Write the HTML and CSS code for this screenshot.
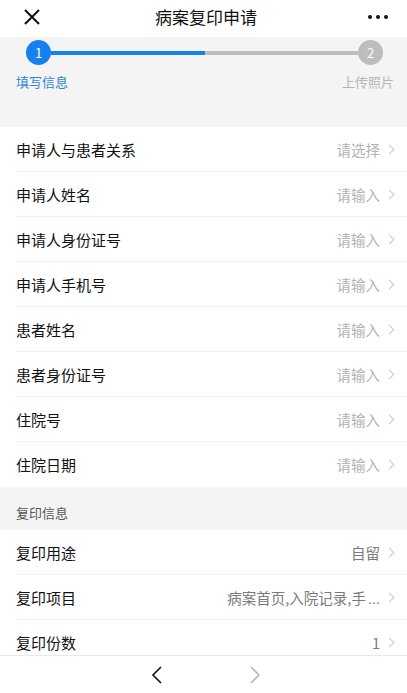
FILE: index.html
```html
<!DOCTYPE html>
<html lang="zh-CN">
<head>
    <meta charset="UTF-8">
    <meta name="viewport" content="width=device-width, initial-scale=1.0">
    <title>病案复印申请</title>
    <link rel="stylesheet" href="styles.css">
</head>
<body>
    <div class="page">
        <div class="topbar">
            <svg class="close" width="16" height="16" viewBox="0 0 16 16">
                <path d="M1 1 L15 15 M15 1 L1 15" stroke="#111" stroke-width="2" fill="none"/>
            </svg>
            <div class="title">病案复印申请</div>
            <div class="more"><span></span><span></span><span></span></div>
        </div>

        <div class="main">
            <div class="steps">
                <div class="step-track">
                    <div class="dot dot-active">1</div>
                    <div class="track"></div>
                    <div class="dot">2</div>
                </div>
                <div class="step-labels">
                    <span class="label-active">填写信息</span>
                    <span class="label-idle">上传照片</span>
                </div>
            </div>

            <div class="group">
                <div class="row"><div class="row-in"><span class="name">申请人与患者关系</span><span class="value muted">请选择</span><i class="arrow"></i></div></div>
                <div class="row"><div class="row-in"><span class="name">申请人姓名</span><span class="value muted">请输入</span><i class="arrow"></i></div></div>
                <div class="row"><div class="row-in"><span class="name">申请人身份证号</span><span class="value muted">请输入</span><i class="arrow"></i></div></div>
                <div class="row"><div class="row-in"><span class="name">申请人手机号</span><span class="value muted">请输入</span><i class="arrow"></i></div></div>
                <div class="row"><div class="row-in"><span class="name">患者姓名</span><span class="value muted">请输入</span><i class="arrow"></i></div></div>
                <div class="row"><div class="row-in"><span class="name">患者身份证号</span><span class="value muted">请输入</span><i class="arrow"></i></div></div>
                <div class="row"><div class="row-in"><span class="name">住院号</span><span class="value muted">请输入</span><i class="arrow"></i></div></div>
                <div class="row"><div class="row-in"><span class="name">住院日期</span><span class="value muted">请输入</span><i class="arrow"></i></div></div>
            </div>

            <div class="group-title">复印信息</div>

            <div class="group">
                <div class="row"><div class="row-in"><span class="name">复印用途</span><span class="value">自留</span><i class="arrow"></i></div></div>
                <div class="row"><div class="row-in"><span class="name">复印项目</span><span class="value">病案首页,入院记录,手<span class="dots">...</span></span><i class="arrow"></i></div></div>
                <div class="row"><div class="row-in"><span class="name">复印份数</span><span class="value">1</span><i class="arrow"></i></div></div>
            </div>
        </div>

        <div class="toolbar">
            <svg width="12" height="18" viewBox="0 0 12 18">
                <path d="M10 1 L2 9 L10 17" stroke="#111" stroke-width="1.6" fill="none"/>
            </svg>
            <svg width="12" height="18" viewBox="0 0 12 18">
                <path d="M2 1 L10 9 L2 17" stroke="#b8b8b8" stroke-width="1.6" fill="none"/>
            </svg>
        </div>
    </div>
</body>
</html>
```

FILE: styles.css
```css
* {
    box-sizing: border-box;
}

body {
    margin: 0;
    padding: 0;
    background-color: #f4f4f4;
    color: #111;
    font-family: "Noto Sans CJK SC", "Noto Sans", sans-serif;
}

.page {
    height: 100vh;
    display: flex;
    flex-direction: column;
}

.topbar {
    height: 37px;
    flex-shrink: 0;
    background-color: #fff;
    display: grid;
    grid-template-columns: 1fr auto 1fr;
    align-items: center;
    padding: 0 19px 0 24px;
}

.close {
    display: block;
    margin-top: -3px;
}

.title {
    font-size: 17px;
    line-height: 22px;
    margin-top: -3px;
}

.more {
    display: flex;
    justify-content: flex-end;
    gap: 4px;
    margin-top: -3px;
}

.more span {
    width: 4px;
    height: 4px;
    border-radius: 50%;
    background-color: #111;
}

.main {
    flex: 1;
    overflow: hidden;
}

.steps {
    height: 90px;
    padding-top: 3px;
}

.step-track {
    display: flex;
    align-items: center;
    padding: 0 24px 0 26px;
}

.dot {
    width: 25px;
    height: 25px;
    border-radius: 50%;
    background-color: #bdbdbd;
    color: #fff;
    font-size: 13px;
    line-height: 25px;
    text-align: center;
    flex-shrink: 0;
}

.dot-active {
    background-color: #1580ee;
}

.track {
    flex: 1;
    height: 4px;
    background: linear-gradient(to right, #1580ee 50%, #bdbdbd 50%);
}

.step-labels {
    display: flex;
    justify-content: space-between;
    padding: 0 13px 0 16px;
    margin-top: 8px;
    font-size: 13px;
    line-height: 18px;
}

.label-active {
    color: #2d86d8;
}

.label-idle {
    color: #b5b5b5;
}

.group {
    background-color: #fff;
}

.row {
    padding-left: 16px;
}

.row-in {
    height: 45px;
    display: flex;
    align-items: center;
    padding-right: 12px;
    border-bottom: 1px solid #f0f0f0;
}

.row:last-child .row-in {
    border-bottom: none;
}

.name {
    flex: 1;
    font-size: 15px;
    color: #111;
}

.value {
    font-size: 14.5px;
    color: #7a7a7a;
    margin-right: 6px;
}

.dots {
    font-family: "Liberation Sans", sans-serif;
    margin-left: 2px;
}

.muted {
    color: #b3b3b3;
}

.arrow {
    width: 7px;
    height: 7px;
    border-top: 1px solid #c8c8c8;
    border-right: 1px solid #c8c8c8;
    transform: rotate(45deg);
    margin-right: 2px;
}

.group-title {
    height: 43px;
    padding: 17px 16px 0;
    font-size: 13px;
    line-height: 18px;
    color: #555;
}

.toolbar {
    height: 38px;
    flex-shrink: 0;
    background-color: #fff;
    border-top: 1px solid #e8e8e8;
    display: flex;
    align-items: center;
    justify-content: center;
    gap: 86px;
    padding-left: 4px;
}

.toolbar svg {
    display: block;
}
```
